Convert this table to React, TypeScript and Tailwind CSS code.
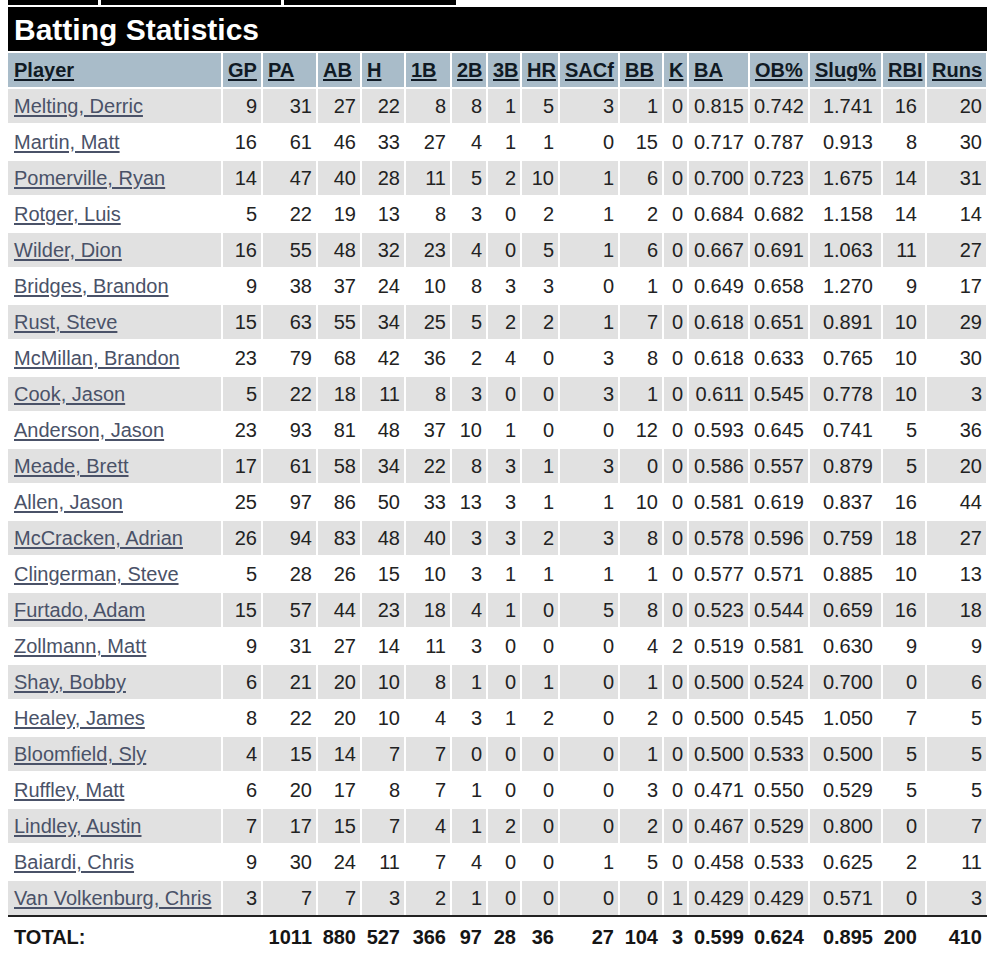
import React from 'react';

type Player = {
  name: string;
  stats: string[];
};

const columns = ['GP', 'PA', 'AB', 'H', '1B', '2B', '3B', 'HR', 'SACf', 'BB', 'K', 'BA', 'OB%', 'Slug%', 'RBI', 'Runs'];

const raw: [string, string][] = [
  ['Melting, Derric', '9 31 27 22 8 8 1 5 3 1 0 0.815 0.742 1.741 16 20'],
  ['Martin, Matt', '16 61 46 33 27 4 1 1 0 15 0 0.717 0.787 0.913 8 30'],
  ['Pomerville, Ryan', '14 47 40 28 11 5 2 10 1 6 0 0.700 0.723 1.675 14 31'],
  ['Rotger, Luis', '5 22 19 13 8 3 0 2 1 2 0 0.684 0.682 1.158 14 14'],
  ['Wilder, Dion', '16 55 48 32 23 4 0 5 1 6 0 0.667 0.691 1.063 11 27'],
  ['Bridges, Brandon', '9 38 37 24 10 8 3 3 0 1 0 0.649 0.658 1.270 9 17'],
  ['Rust, Steve', '15 63 55 34 25 5 2 2 1 7 0 0.618 0.651 0.891 10 29'],
  ['McMillan, Brandon', '23 79 68 42 36 2 4 0 3 8 0 0.618 0.633 0.765 10 30'],
  ['Cook, Jason', '5 22 18 11 8 3 0 0 3 1 0 0.611 0.545 0.778 10 3'],
  ['Anderson, Jason', '23 93 81 48 37 10 1 0 0 12 0 0.593 0.645 0.741 5 36'],
  ['Meade, Brett', '17 61 58 34 22 8 3 1 3 0 0 0.586 0.557 0.879 5 20'],
  ['Allen, Jason', '25 97 86 50 33 13 3 1 1 10 0 0.581 0.619 0.837 16 44'],
  ['McCracken, Adrian', '26 94 83 48 40 3 3 2 3 8 0 0.578 0.596 0.759 18 27'],
  ['Clingerman, Steve', '5 28 26 15 10 3 1 1 1 1 0 0.577 0.571 0.885 10 13'],
  ['Furtado, Adam', '15 57 44 23 18 4 1 0 5 8 0 0.523 0.544 0.659 16 18'],
  ['Zollmann, Matt', '9 31 27 14 11 3 0 0 0 4 2 0.519 0.581 0.630 9 9'],
  ['Shay, Bobby', '6 21 20 10 8 1 0 1 0 1 0 0.500 0.524 0.700 0 6'],
  ['Healey, James', '8 22 20 10 4 3 1 2 0 2 0 0.500 0.545 1.050 7 5'],
  ['Bloomfield, Sly', '4 15 14 7 7 0 0 0 0 1 0 0.500 0.533 0.500 5 5'],
  ['Ruffley, Matt', '6 20 17 8 7 1 0 0 0 3 0 0.471 0.550 0.529 5 5'],
  ['Lindley, Austin', '7 17 15 7 4 1 2 0 0 2 0 0.467 0.529 0.800 0 7'],
  ['Baiardi, Chris', '9 30 24 11 7 4 0 0 1 5 0 0.458 0.533 0.625 2 11'],
  ['Van Volkenburg, Chris', '3 7 7 3 2 1 0 0 0 0 1 0.429 0.429 0.571 0 3'],
];

const players: Player[] = raw.map(([name, s]) => ({ name, stats: s.split(' ') }));

const totals = ['', '1011', '880', '527', '366', '97', '28', '36', '27', '104', '3', '0.599', '0.624', '0.895', '200', '410'];

const gridCols =
  'grid grid-cols-[213px_38px_53px_42px_42px_44px_34px_32px_36px_58px_42px_23px_59px_58px_71px_42px_59px] gap-x-[2px]';

// Slug% and RBI sit a little further from the right edge
function padFor(i: number) {
  return i === 13 || i === 14 ? 'pr-[8px]' : 'pr-[4px]';
}

export default function App() {
  return (
    <div className="min-h-screen bg-white font-['Liberation_Sans',Arial,sans-serif] text-[#1f1f1f]">
      <div className="pl-2 w-[987px]">
        {/* leftover tab strip */}
        <div className="flex gap-[3px] h-[5px]">
          <div className="w-[90px] shrink-0 bg-black" />
          <div className="w-[180px] shrink-0 bg-black" />
          <div className="w-[172px] shrink-0 bg-black" />
        </div>

        <div className="mt-[2px] h-[44px] bg-black text-white font-bold text-[30px] px-[6px] flex items-center">
          Batting Statistics
        </div>

        <div className={`${gridCols} gap-y-[2px] mt-[2px]`}>
          <div className="h-[34px] bg-[#a9bcc9] flex items-center pl-[6px] text-[20px] font-bold text-[#101a24]">
            <span className="underline underline-offset-2">Player</span>
          </div>
          {columns.map((c) => (
            <div key={c} className="h-[34px] bg-[#a9bcc9] flex items-center pl-[5px] text-[20px] font-bold text-[#101a24]">
              <span className="underline underline-offset-2">{c}</span>
            </div>
          ))}

          {players.map((p, r) => {
            const bg = r % 2 === 0 ? 'bg-[#e1e1e1]' : 'bg-white';
            return (
              <React.Fragment key={p.name}>
                <div className={`h-[34px] ${bg} flex items-center pl-[6px] text-[20px] text-[#4a5268] whitespace-nowrap`}>
                  <span className="underline underline-offset-2">{p.name}</span>
                </div>
                {p.stats.map((v, i) => (
                  <div key={i} className={`h-[34px] ${bg} flex items-center justify-end ${padFor(i)} text-[20px] text-[#222]`}>
                    {v}
                  </div>
                ))}
              </React.Fragment>
            );
          })}
        </div>

        <div className="border-t-2 border-[#222]">
          <div className={`${gridCols} h-[38px] mt-[1px] font-bold text-[20px] text-[#151515]`}>
            <div className="flex items-center pl-[6px]">TOTAL:</div>
            {totals.map((v, i) => (
              <div key={i} className={`flex items-center justify-end ${padFor(i)}`}>
                {v}
              </div>
            ))}
          </div>
        </div>
      </div>
    </div>
  );
}
